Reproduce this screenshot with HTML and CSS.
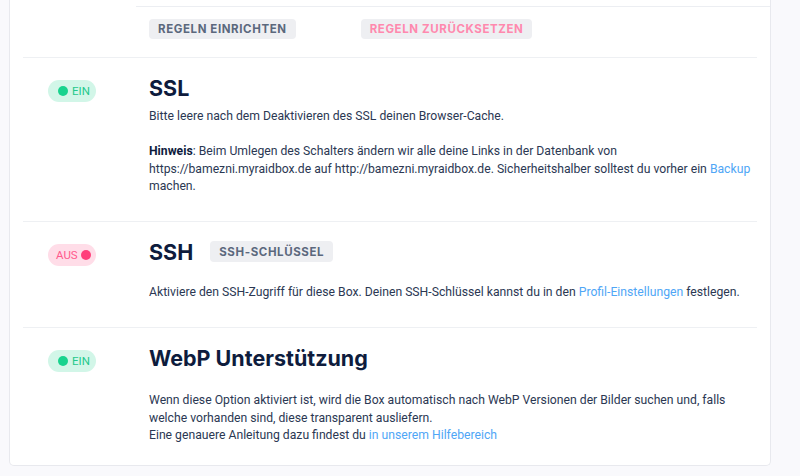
FILE: index.html
```html
<!DOCTYPE html>
<html lang="de">
<head>
<meta charset="utf-8">
<link rel="stylesheet" href="styles.css">
</head>
<body>
<div class="card">
  <div class="top-strip"></div>
  <div class="rules">
    <button class="btn">Regeln einrichten</button>
    <button class="btn btn-pink">Regeln zurücksetzen</button>
  </div>

  <section class="row">
    <div class="toggle-col"><span class="pill pill-on"><span class="dot"></span>EIN</span></div>
    <div class="content">
      <div class="head"><h2>SSL</h2></div>
      <p class="desc tight">Bitte leere nach dem Deaktivieren des SSL deinen Browser-Cache.</p>
      <p class="desc"><b>Hinweis</b>: Beim Umlegen des Schalters ändern wir alle deine Links in der Datenbank von https://bamezni.myraidbox.de auf http://bamezni.myraidbox.de. Sicherheitshalber solltest du vorher ein <a href="#">Backup</a> machen.</p>
    </div>
  </section>

  <section class="row">
    <div class="toggle-col"><span class="pill pill-off">AUS<span class="dot"></span></span></div>
    <div class="content">
      <div class="head"><h2>SSH</h2><button class="btn btn-inline">SSH-Schlüssel</button></div>
      <p class="desc">Aktiviere den SSH-Zugriff für diese Box. Deinen SSH-Schlüssel kannst du in den <a href="#">Profil-Einstellungen</a> festlegen.</p>
    </div>
  </section>

  <section class="row last">
    <div class="toggle-col"><span class="pill pill-on"><span class="dot"></span>EIN</span></div>
    <div class="content">
      <div class="head"><h2>WebP Unterstützung</h2></div>
      <p class="desc">Wenn diese Option aktiviert ist, wird die Box automatisch nach WebP Versionen der Bilder suchen und, falls welche vorhanden sind, diese transparent ausliefern.<br>Eine genauere Anleitung dazu findest du <a href="#">in unserem Hilfebereich</a></p>
    </div>
  </section>
</div>
</body>
</html>
```

FILE: styles.css
```css
html, body {
  margin: 0;
  padding: 0;
}
body {
  background: #f9f9fc;
  font-family: Roboto, "Liberation Sans", sans-serif;
  color: #2b3853;
}
.card {
  margin-left: 9px;
  width: 760px;
  background: #fff;
  border: 1px solid #e8e9ee;
  border-top: none;
  border-radius: 0 0 5px 5px;
}
.top-strip {
  margin-left: 126px;
  height: 6px;
  border-bottom: 1px solid #eceef2;
}
.rules {
  margin-left: 126px;
  padding: 12px 0 0 13px;
  box-sizing: border-box;
  height: 50px;
  display: flex;
  align-items: flex-start;
}
.btn {
  font-family: Inter, "Open Sans", sans-serif;
  font-weight: 700;
  font-size: 11.5px;
  letter-spacing: 0.6px;
  text-transform: uppercase;
  color: #5b687d;
  background: #eeeff2;
  border: none;
  border-radius: 4px;
  height: 20px;
  padding: 0 9px;
  line-height: 20px;
}
.btn-pink {
  color: #ff89ae;
  margin-left: 65px;
}
.btn-inline {
  margin-left: 17px;
  height: 21px;
}
.row {
  margin: 0 13px;
  border-top: 1px solid #eef0f3;
  padding: 16px 0 25px 25px;
  display: flex;
  align-items: flex-start;
}
.row.last {
  padding-bottom: 20px;
}
.row.last .head {
  margin-bottom: 20.5px;
}
.toggle-col {
  width: 101px;
  flex: none;
  padding-top: 6px;
}
.pill {
  display: inline-flex;
  align-items: center;
  box-sizing: border-box;
  width: 48px;
  height: 22px;
  border-radius: 11px;
  font-size: 11.5px;
  line-height: 22px;
}
.pill-on {
  background: #d2f6e8;
  color: #22c98c;
  padding-left: 10px;
}
.pill-on .dot {
  background: #18d38e;
  margin-right: 4px;
}
.pill-off {
  background: #ffdde8;
  color: #ff5a8d;
  padding-left: 8px;
}
.pill-off .dot {
  background: #ff3f7b;
  margin-left: 3px;
}
.dot {
  width: 10px;
  height: 10px;
  border-radius: 50%;
  display: inline-block;
}
.content {
  flex: 1;
  min-width: 0;
}
.head {
  display: flex;
  align-items: center;
  height: 28px;
  margin-bottom: 18.5px;
}
h2 {
  margin: 0;
  font-family: Inter, "Open Sans", sans-serif;
  font-weight: 700;
  font-size: 21.5px;
  line-height: 28px;
  color: #0e1c3d;
}
.desc {
  margin: 0;
  font-size: 12.2px;
  line-height: 17.5px;
}
.desc.tight {
  margin-top: -12.5px;
  margin-bottom: 17.5px;
}
.desc b {
  color: #0e1c3d;
}
a {
  color: #4fa6f6;
  text-decoration: none;
}
```
